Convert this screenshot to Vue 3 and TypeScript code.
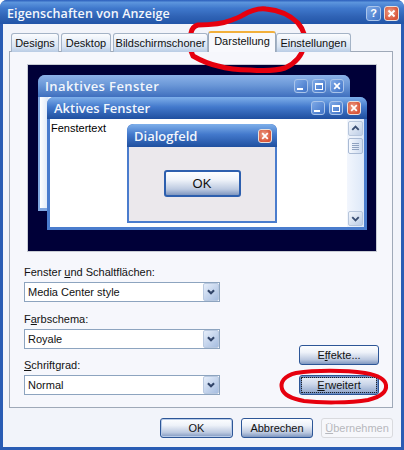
<script setup lang="ts">
type Tab = { label: string; width: number; active?: boolean }

const tabs: Tab[] = [
  { label: 'Designs', width: 48 },
  { label: 'Desktop', width: 50 },
  { label: 'Bildschirmschoner', width: 95 },
  { label: 'Darstellung', width: 68, active: true },
  { label: 'Einstellungen', width: 75 },
]

const combos = [
  { before: 'Fenster ', key: 'u', after: 'nd Schaltflächen:', value: 'Media Center style' },
  { before: 'F', key: 'a', after: 'rbschema:', value: 'Royale' },
  { before: '', key: 'S', after: 'chriftgrad:', value: 'Normal' },
]
</script>

<template>
  <div class="dialog">
    <header class="titlebar">
      <span class="titlebar__text">Eigenschaften von Anzeige</span>
      <button class="cap cap--blue cap--big" type="button" aria-label="Hilfe">?</button>
      <button class="cap cap--red cap--big" type="button" aria-label="Schließen">
        <svg viewBox="0 0 15 15"><path d="M4 4l7 7M11 4l-7 7" /></svg>
      </button>
    </header>

    <div class="body">
      <div class="tabs">
        <div
          v-for="tab in tabs"
          :key="tab.label"
          class="tab"
          :class="{ 'tab--active': tab.active }"
          :style="{ width: `${tab.width}px` }"
        >
          {{ tab.label }}
        </div>
      </div>

      <section class="panel">
        <div class="preview">
          <div class="mini mini--inactive">
            <div class="mini__title">
              <span class="mini__text">Inaktives Fenster</span>
              <span class="cap cap--blue"><i class="glyph-min" /></span>
              <span class="cap cap--blue"><i class="glyph-max" /></span>
              <span class="cap cap--blue">
                <svg viewBox="0 0 15 15"><path d="M4 4l7 7M11 4l-7 7" /></svg>
              </span>
            </div>
            <div class="mini__body" />
          </div>

          <div class="mini mini--active">
            <div class="mini__title">
              <span class="mini__text">Aktives Fenster</span>
              <span class="cap cap--blue"><i class="glyph-min" /></span>
              <span class="cap cap--blue"><i class="glyph-max" /></span>
              <span class="cap cap--red">
                <svg viewBox="0 0 15 15"><path d="M4 4l7 7M11 4l-7 7" /></svg>
              </span>
            </div>
            <div class="mini__body mini__body--text">
              <span class="window-text">Fenstertext</span>
              <div class="scrollbar">
                <span class="sb-btn">
                  <svg viewBox="0 0 14 14"><path d="M3.5 8.5L7 5l3.5 3.5" /></svg>
                </span>
                <span class="sb-thumb"><i /><i /><i /><i /></span>
                <span class="sb-btn sb-btn--end">
                  <svg viewBox="0 0 14 14"><path d="M3.5 5.5L7 9l3.5-3.5" /></svg>
                </span>
              </div>
            </div>

            <div class="mini mini--dialog">
              <div class="mini__title">
                <span class="mini__text">Dialogfeld</span>
                <span class="cap cap--red">
                  <svg viewBox="0 0 15 15"><path d="M4 4l7 7M11 4l-7 7" /></svg>
                </span>
              </div>
              <div class="mini__body mini__body--dialog">
                <button class="btn btn--preview" type="button">OK</button>
              </div>
            </div>
          </div>
        </div>

        <div class="lower">
          <div class="fields">
            <div v-for="combo in combos" :key="combo.value" class="field">
              <label class="field__label">{{ combo.before }}<u>{{ combo.key }}</u>{{ combo.after }}</label>
              <div class="combo">
                <span class="combo__value">{{ combo.value }}</span>
                <span class="combo__btn">
                  <svg viewBox="0 0 16 18"><path d="M4.5 7L8 10.5 11.5 7" /></svg>
                </span>
              </div>
            </div>
          </div>
          <div class="side">
            <button class="btn" type="button">E<u>f</u>fekte...</button>
            <button class="btn btn--focus" type="button"><u>E</u>rweitert</button>
          </div>
        </div>
      </section>

      <footer class="footer">
        <button class="btn btn--ok" type="button">OK</button>
        <button class="btn btn--cancel" type="button">Abbrechen</button>
        <button class="btn btn--disabled" type="button" disabled><u>Ü</u>bernehmen</button>
      </footer>
    </div>

    <!-- hand drawn red markers on top of the screenshot -->
    <svg class="scribble" viewBox="0 0 404 450" aria-hidden="true">
      <path d="M243 15C250 11 258 8 266 9C278 10 290 15 298 23C304 30 306 38 304 46C302 55 296 63 285 68C275 71 262 71 250 70C240 70 228 69 218 66C209 64 200 60 193 56C190 50 189 42 191 33C192 28 194 26 198 25C210 25 222 24 232 20C237 18 240 17 243 15Z" />
      <path class="scribble__thin" d="M296 373C315 370 345 370 365 373C377 375 385 379 386 385C387 392 380 397 368 400C350 403 320 403 304 401C293 399 284 395 282 389C280 382 284 376 296 373Z" />
    </svg>
  </div>
</template>

<style>
html,
body {
  margin: 0;
  background: #fff;
}
</style>

<style scoped>
.dialog {
  position: relative;
  width: 404px;
  height: 450px;
  box-sizing: border-box;
  display: flex;
  flex-direction: column;
  overflow: hidden;
  border-radius: 7px 7px 0 0;
  background: #2a5cb4;
  font-family: "Liberation Sans", Arial, sans-serif;
  font-size: 11px;
  color: #111;
}

.titlebar {
  flex: none;
  height: 24px;
  display: flex;
  align-items: center;
  gap: 3px;
  padding: 2px 5px 0 7px;
  box-sizing: border-box;
  background: linear-gradient(#2a5dbb 0, #5c95dd 10%, #3f78cc 35%, #2f62b4 70%, #2155a8 100%);
}

.titlebar__text {
  flex: 1;
  font-family: "Open Sans", sans-serif;
  font-size: 12.5px;
  font-weight: 600;
  letter-spacing: 0.1px;
  color: #f4f7fc;
  white-space: nowrap;
}

.cap {
  flex: none;
  width: 14px;
  height: 14px;
  padding: 0;
  display: flex;
  align-items: center;
  justify-content: center;
  box-sizing: border-box;
  border: 1px solid #e3ecf8;
  border-radius: 3px;
  color: #fff;
  font-family: "Liberation Sans", sans-serif;
  font-size: 11px;
  font-weight: 700;
}

.cap--big {
  width: 15px;
  height: 15px;
}

.cap--blue {
  background: linear-gradient(135deg, #7ea9e6, #3f73c8);
  border-color: #a9c4ea;
}

.cap--red {
  background: radial-gradient(circle at 40% 40%, #eda38c, #d9563a 70%);
  border-color: #e8e0dc;
}

.cap svg {
  width: 100%;
  height: 100%;
  fill: none;
  stroke: #fff;
  stroke-width: 2.2;
}

.glyph-min {
  width: 6px;
  height: 2px;
  margin: 6px 3px 0 0;
  background: #fff;
}

.glyph-max {
  width: 8px;
  height: 7px;
  box-sizing: border-box;
  border: 1px solid #fff;
  border-top-width: 2px;
}

.body {
  flex: 1;
  display: flex;
  flex-direction: column;
  margin: 0 3px 3px;
  padding: 7px 8px 0 6px;
  background: #f2f4fa;
}

.tabs {
  flex: none;
  height: 21px;
  display: flex;
  align-items: flex-end;
  gap: 2px;
  padding-left: 2px;
  position: relative;
  z-index: 1;
  margin-bottom: -1px;
}

.tab {
  height: 19px;
  box-sizing: border-box;
  display: flex;
  align-items: center;
  justify-content: center;
  border: 1px solid #a4b3c6;
  border-bottom: 0;
  border-radius: 3px 3px 0 0;
  background: linear-gradient(#fbfcfe, #d8e4f3 70%, #b9cce4);
  white-space: nowrap;
}

.tab:nth-child(4),
.tab:nth-child(5) {
  margin-left: -2px;
}

.tab--active {
  height: 21px;
  padding-bottom: 3px;
  background: #f8f9fd;
  border-color: #9aa9bb;
  border-top: 2px solid #f2b03c;
}

.panel {
  flex: none;
  height: 357px;
  box-sizing: border-box;
  border: 1px solid #9fa9b8;
  background: #f6f7fc;
  padding: 13px 13px 0 14px;
}

.preview {
  position: relative;
  height: 186px;
  margin: 0 3px 0 4px;
  background: #000038;
  outline: 1px solid #c8ccd4;
}

.mini {
  position: absolute;
  box-sizing: border-box;
  display: flex;
  flex-direction: column;
  border-radius: 7px 7px 0 0;
  background: #4a7ccd;
}

.mini--inactive {
  left: 10px;
  top: 10px;
  width: 312px;
  height: 136px;
  background: #7fa6e0;
}

.mini--active {
  left: 19px;
  top: 32px;
  width: 320px;
  height: 133px;
}

.mini--dialog {
  left: 80px;
  top: 27px;
  width: 150px;
  height: 99px;
  border-radius: 6px 6px 0 0;
}

.mini__title {
  flex: none;
  height: 22px;
  display: flex;
  align-items: center;
  gap: 4px;
  padding: 0 6px 0 7px;
  border-radius: 7px 7px 0 0;
  background: linear-gradient(#7fb0ea, #4379cc 45%, #1f4f9f);
}

.mini--inactive > .mini__title {
  background: linear-gradient(#8cb2e8, #6b98d8 45%, #3f6fbe);
}

.mini--dialog .mini__title {
  height: 23px;
  padding-right: 5px;
}

.mini__text {
  flex: 1;
  font-family: "Open Sans", sans-serif;
  font-size: 13px;
  font-weight: 600;
  color: #f2f6fc;
  white-space: nowrap;
}

.mini--inactive > .mini__title .mini__text {
  letter-spacing: 0.4px;
}

.mini__body {
  flex: 1;
  min-height: 0;
  margin: 0 3px 3px;
  background: #fff;
}

.mini--inactive > .mini__body {
  margin: 0 2px 3px;
  background: linear-gradient(90deg, #fff 0, #dfe9f8 8px, #fff 9px);
}

.mini__body--text {
  display: flex;
  justify-content: space-between;
}

.window-text {
  padding: 3px 0 0 1px;
  font-size: 11px;
  color: #000;
}

.scrollbar {
  width: 17px;
  display: flex;
  flex-direction: column;
  box-sizing: border-box;
  padding: 2px 1px 1px;
  gap: 2px;
  background: linear-gradient(90deg, #f2f6fd, #dde8f8);
}

.sb-btn {
  flex: none;
  height: 15px;
  box-sizing: border-box;
  border: 1px solid #b7c6dc;
  border-radius: 2px;
  background: linear-gradient(135deg, #f4f7fc, #bccde6);
}

.sb-btn--end {
  margin-top: auto;
}

.sb-btn svg {
  display: block;
  width: 100%;
  height: 100%;
  fill: none;
  stroke: #3a4e72;
  stroke-width: 2;
}

.sb-thumb {
  flex: none;
  height: 16px;
  box-sizing: border-box;
  border: 1px solid #a9bad4;
  border-radius: 2px;
  background: linear-gradient(90deg, #f6f9fe, #cddbf0);
  display: flex;
  flex-direction: column;
  align-items: center;
  justify-content: center;
  gap: 1px;
}

.sb-thumb i {
  width: 7px;
  height: 1px;
  background: #8fa2c0;
}

.mini__body--dialog {
  margin: 0 2px 2px;
  background: #ebe8ec;
  display: flex;
  justify-content: center;
  padding-top: 23px;
}

.btn {
  height: 20px;
  width: 80px;
  padding: 0;
  box-sizing: border-box;
  border: 1px solid #2d5697;
  border-radius: 3px;
  background: linear-gradient(#fdfeff, #eef2f9 35%, #bcc9e0 75%, #7f97c0);
  font: inherit;
  color: #111;
}

.btn--preview {
  width: 77px;
  height: 27px;
  border: 2px solid #2d5fae;
  font-size: 13px;
}

.btn--focus {
  background: linear-gradient(#eef2f9, #ccd7ea 45%, #8aa1c8);
  box-shadow: inset 0 0 0 2px #6f8fc4;
  outline: 1px dotted #222;
  outline-offset: -3px;
}

.btn--ok {
  width: 73px;
  box-shadow: inset 0 0 0 1px #b8cbe8;
}

.btn--cancel {
  width: 72px;
}

.btn--disabled {
  width: 72px;
  border-color: #d9dade;
  background: #f6f7fb;
  color: #b6b8bd;
}

.lower {
  display: flex;
  justify-content: space-between;
  align-items: flex-end;
  margin-top: 14px;
}

.fields {
  width: 196px;
  display: flex;
  flex-direction: column;
  gap: 9.5px;
}

.field__label {
  display: block;
  height: 14px;
  line-height: 14px;
  margin-bottom: 3px;
}

.combo {
  height: 20px;
  box-sizing: border-box;
  display: flex;
  align-items: stretch;
  border: 1px solid #8da4bf;
  background: #fff;
}

.combo__value {
  flex: 1;
  padding-left: 3px;
  line-height: 18px;
}

.combo__btn {
  flex: none;
  width: 16px;
  box-sizing: border-box;
  border: 1px solid #b9c9e0;
  border-radius: 2px;
  background: linear-gradient(135deg, #e6eefa, #a6bde0);
}

.combo__btn svg {
  display: block;
  width: 100%;
  height: 100%;
  fill: none;
  stroke: #33466a;
  stroke-width: 2.4;
}

.side {
  display: flex;
  flex-direction: column;
  gap: 10px;
}

.footer {
  display: flex;
  justify-content: flex-end;
  gap: 8px;
  padding-top: 10px;
}

.scribble {
  position: absolute;
  inset: 0;
  width: 404px;
  height: 450px;
  pointer-events: none;
  fill: none;
  stroke: #e6000e;
  stroke-width: 5;
  stroke-linecap: round;
}

.scribble__thin {
  stroke-width: 4;
}
</style>
